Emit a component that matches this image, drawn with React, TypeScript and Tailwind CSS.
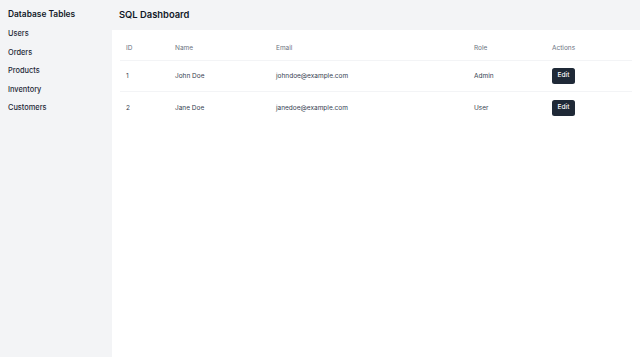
import React from "react";

const rows = [
  { id: 1, name: "John Doe", email: "johndoe@example.com", role: "Admin" },
  { id: 2, name: "Jane Doe", email: "janedoe@example.com", role: "User" },
];

export default function App() {
  return (
    <div className="flex h-screen w-full bg-[#f3f4f6] text-[#111827]" style={{ fontFamily: "Inter, 'Noto Sans', sans-serif" }}>
      <aside className="w-[112px] shrink-0 px-2 pt-[8px]">
        <h2 className="text-[8.4px] font-semibold leading-[12px] text-[#111827]">Database Tables</h2>
        <ul className="mt-[8px] flex flex-col">
          {["Users", "Orders", "Products", "Inventory", "Customers"].map((t) => (
            <li key={t} className="h-[18.6px] text-[7.4px] font-medium leading-[12px] text-[#1f2937]">{t}</li>
          ))}
        </ul>
      </aside>
      <main className="flex flex-1 flex-col">
        <header className="flex h-[30px] items-center px-[7px] pt-[1px]">
          <h1 className="text-[9.4px] font-semibold text-[#111827]">SQL Dashboard</h1>
        </header>
        <div className="flex-1 bg-white px-2 pt-[7px]">
          <table className="w-[512px] border-collapse text-left text-[6.5px] text-[#374151]">
            <thead>
              <tr className="h-[23px] border-b border-[#f3f4f6]">
                <th className="w-[49px] px-[6px] pt-[1px] font-normal text-[#6b7280]">ID</th>
                <th className="w-[101px] px-[6px] pt-[1px] font-normal text-[#6b7280]">Name</th>
                <th className="w-[198px] px-[6px] pt-[1px] font-normal text-[#6b7280]">Email</th>
                <th className="w-[78px] px-[6px] pt-[1px] font-normal text-[#6b7280]">Role</th>
                <th className="px-[6px] pt-[1px] font-normal text-[#6b7280]">Actions</th>
              </tr>
            </thead>
            <tbody>
              {rows.map((r, i) => (
                <tr key={r.id} className={`h-[31.5px] ${i === 0 ? "border-b border-[#f3f4f6]" : ""}`}>
                  <td className="px-[6px] pt-[2px]">{r.id}</td>
                  <td className="px-[6px] pt-[2px]">{r.name}</td>
                  <td className="px-[6px] pt-[2px]">{r.email}</td>
                  <td className="px-[6px] pt-[2px]">{r.role}</td>
                  <td className="px-[6px] pt-[1px]">
                    <button className="h-[16px] w-[23px] rounded-[2.5px] bg-[#1f2937] text-[6.5px] font-medium text-white">Edit</button>
                  </td>
                </tr>
              ))}
            </tbody>
          </table>
        </div>
      </main>
    </div>
  );
}
